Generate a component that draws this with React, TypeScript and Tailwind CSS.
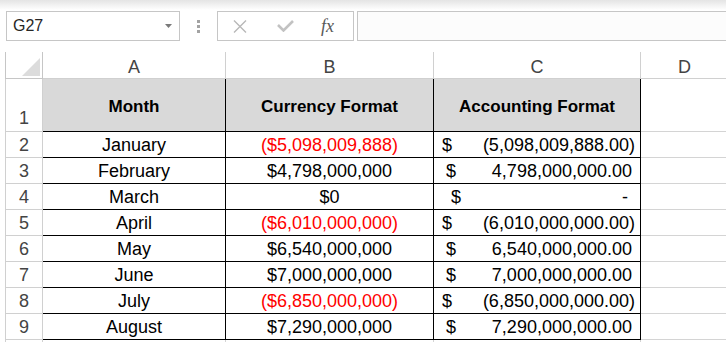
import React from "react";

type Kind = "neg" | "pos" | "zero";

const rows: { n: number; month: string; cur: string; acc: string; kind: Kind }[] = [
  { n: 2, month: "January", cur: "($5,098,009,888)", acc: "(5,098,009,888.00)", kind: "neg" },
  { n: 3, month: "February", cur: "$4,798,000,000", acc: "4,798,000,000.00", kind: "pos" },
  { n: 4, month: "March", cur: "$0", acc: "-", kind: "zero" },
  { n: 5, month: "April", cur: "($6,010,000,000)", acc: "(6,010,000,000.00)", kind: "neg" },
  { n: 6, month: "May", cur: "$6,540,000,000", acc: "6,540,000,000.00", kind: "pos" },
  { n: 7, month: "June", cur: "$7,000,000,000", acc: "7,000,000,000.00", kind: "pos" },
  { n: 8, month: "July", cur: "($6,850,000,000)", acc: "(6,850,000,000.00)", kind: "neg" },
  { n: 9, month: "August", cur: "$7,290,000,000", acc: "7,290,000,000.00", kind: "pos" },
];

const accPad: Record<Kind, string> = {
  neg: "pl-[8px] pr-[5px]",
  pos: "pl-[12px] pr-[8px]",
  zero: "pl-[17px] pr-[12px]",
};

function FormulaBar() {
  return (
    <div className="flex h-[42px] items-start pt-[1px] bg-white">
      {/* name box */}
      <div className="ml-[6px] w-[174px] h-[30px] border border-[#c6c6c6] bg-white flex items-center justify-between pl-[6px] pr-[7px]">
        <span className="text-[16px] leading-none text-[#262626]">G27</span>
        <svg width="7" height="4" viewBox="0 0 7 4">
          <polygon points="0,0 7,0 3.5,4" fill="#7a7a7a" />
        </svg>
      </div>

      {/* grip dots */}
      <div className="ml-[17px] w-[3px] h-[30px] flex flex-col items-center justify-center gap-[2px]">
        <div className="w-[3px] h-[3px] bg-[#a3a3a3]" />
        <div className="w-[3px] h-[3px] bg-[#a3a3a3]" />
        <div className="w-[3px] h-[3px] bg-[#a3a3a3]" />
      </div>

      {/* cancel / enter / fx */}
      <div className="ml-[17px] w-[137px] h-[30px] border border-[#c6c6c6] bg-white flex items-center pl-[15px]">
        <svg width="14" height="13" viewBox="0 0 14 13">
          <path d="M1 0.5 L13 12.5 M13 0.5 L1 12.5" stroke="#b8b8b8" strokeWidth="1.4" fill="none" />
        </svg>
        <svg className="ml-[30px]" width="17" height="12" viewBox="0 0 17 12">
          <polyline points="1,5 6.5,10.5 16,1" stroke="#c2c2c2" strokeWidth="2.6" fill="none" />
        </svg>
        <span className="ml-[27px] font-['Liberation_Serif',serif] italic text-[18px] leading-none text-[#585858]">
          fx
        </span>
      </div>

      {/* formula input */}
      <div className="ml-[3px] flex-1 h-[30px] border border-r-0 border-[#c6c6c6] bg-[#fcfcfc]" />
    </div>
  );
}

function ColumnHeaders() {
  const cols = [
    { l: "A", w: "w-[183px]" },
    { l: "B", w: "w-[208px]" },
    { l: "C", w: "w-[207px]" },
    { l: "D", w: "w-[88px]" },
  ];
  return (
    <div className="flex h-[27px]">
      <div className="w-[5px] shrink-0" />
      <div className="w-[38px] shrink-0 border-l border-r border-b border-[#c6c6c6] flex items-end justify-end pr-[2px] pb-[2px]">
        <svg width="18" height="18" viewBox="0 0 18 18">
          <polygon points="18,0 18,18 0,18" fill="#dcdcdc" />
        </svg>
      </div>
      {cols.map((c) => (
        <div
          key={c.l}
          className={`${c.w} shrink-0 border-r border-b border-[#d0d0d0] flex items-center justify-center pt-[3px] text-[18px] leading-none text-[#444]`}
        >
          {c.l}
        </div>
      ))}
    </div>
  );
}

function RowHead({ n, pb }: { n?: number; pb: string }) {
  return (
    <div
      className={`w-[38px] shrink-0 border-l border-r border-b border-[#d0d0d0] flex items-end justify-center ${pb} text-[18px] leading-none text-[#444]`}
    >
      {n}
    </div>
  );
}

export default function App() {
  return (
    <div className="w-[726px] h-[342px] overflow-hidden bg-white font-['Liberation_Sans',Arial,sans-serif] text-black">
      <div className="h-[10px] bg-gradient-to-b from-[#e4e4e4] to-white" />
      <FormulaBar />
      <ColumnHeaders />

      {/* row 1: headers */}
      <div className="flex h-[53px]">
        <div className="w-[5px] shrink-0" />
        <RowHead n={1} pb="pb-[4px]" />
        <div className="w-[183px] shrink-0 bg-[#d9d9d9] border-r border-b border-black flex items-center justify-center pt-[3px] font-bold text-[17px] leading-none">
          Month
        </div>
        <div className="w-[208px] shrink-0 bg-[#d9d9d9] border-r border-b border-black flex items-center justify-center pt-[3px] font-bold text-[17px] leading-none">
          Currency Format
        </div>
        <div className="w-[207px] shrink-0 bg-[#d9d9d9] border-r border-b border-black flex items-center justify-center pt-[3px] font-bold text-[17px] leading-none">
          Accounting Format
        </div>
        <div className="w-[88px] shrink-0 border-r border-b border-[#d4d4d4]" />
      </div>

      {rows.map((r) => (
        <div key={r.n} className="flex h-[26px]">
          <div className="w-[5px] shrink-0" />
          <RowHead n={r.n} pb="pb-[3px]" />
          <div className="w-[183px] shrink-0 border-r border-b border-black flex items-end justify-center pb-[3px] text-[18px] leading-none">
            {r.month}
          </div>
          <div
            className={`w-[208px] shrink-0 border-r border-b border-black flex items-end justify-center pb-[3px] text-[18px] leading-none ${
              r.kind === "neg" ? "text-[#ff0000]" : ""
            }`}
          >
            {r.cur}
          </div>
          <div
            className={`w-[207px] shrink-0 border-r border-b border-black flex items-end justify-between pb-[3px] ${accPad[r.kind]} text-[18px] leading-none`}
          >
            <span>$</span>
            <span>{r.acc}</span>
          </div>
          <div className="w-[88px] shrink-0 border-r border-b border-[#d4d4d4]" />
        </div>
      ))}

      {/* row 10, only its top edge is in view */}
      <div className="flex h-[26px]">
        <div className="w-[5px] shrink-0" />
        <RowHead pb="pb-[3px]" />
        <div className="w-[183px] shrink-0 border-r border-b border-[#d4d4d4]" />
        <div className="w-[208px] shrink-0 border-r border-b border-[#d4d4d4]" />
        <div className="w-[207px] shrink-0 border-r border-b border-[#d4d4d4]" />
        <div className="w-[88px] shrink-0 border-r border-b border-[#d4d4d4]" />
      </div>
    </div>
  );
}
